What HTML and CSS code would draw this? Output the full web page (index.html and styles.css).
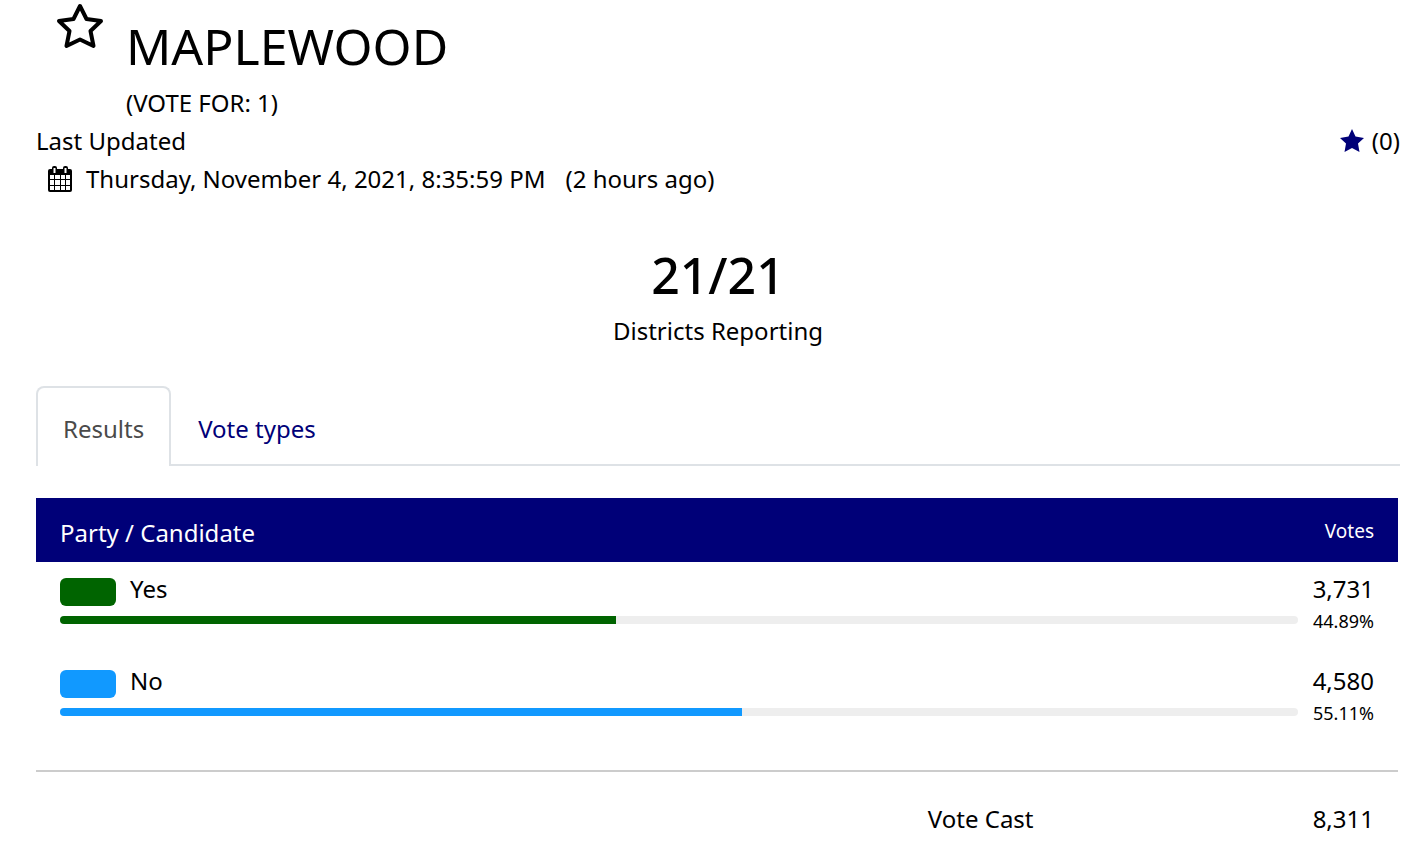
FILE: index.html
```html
<!DOCTYPE html>
<html lang="en">
<head>
    <meta charset="UTF-8">
    <meta name="viewport" content="width=device-width, initial-scale=1">
    <title>Maplewood - Election Results</title>
    <link rel="stylesheet" href="styles.css">
</head>
<body>

<main class="contest">
    <header class="contest-header">
        <button type="button" class="favorite" aria-label="Add to favorites">
            <svg class="favorite-icon" viewBox="0 0 48 52" aria-hidden="true">
                <path d="M24 6 L30.500 19 L45 21 L34.500 31 L37.500 46 L24 39.500 L10.500 46 L13.500 31 L3 21 L17.500 19 Z"/>
            </svg>
        </button>
        <div>
            <h1 class="contest-title">MAPLEWOOD</h1>
            <div>(VOTE FOR: 1)</div>
        </div>
    </header>

    <div class="updated">
        <div>
            <div>Last Updated</div>
            <div class="updated-time">
                <svg class="calendar-icon" viewBox="0 0 24 26" aria-hidden="true">
                    <path d="M2 3 H22 Q24 3 24 5 V24 Q24 26 22 26 H2 Q0 26 0 24 V5 Q0 3 2 3 Z"/>
                    <path class="calendar-cell" d="M2 9h4v4H2z M7 9h5v4H7z M13 9h4v4h-4z M18 9h4v4h-4z M2 14h4v5H2z M7 14h5v5H7z M13 14h4v5h-4z M18 14h4v5h-4z M2 20h4v4H2z M7 20h5v4H7z M13 20h4v4h-4z M18 20h4v4h-4z"/>
                    <rect x="4" y="0" width="5" height="8" rx="2"/>
                    <rect x="15" y="0" width="5" height="8" rx="2"/>
                    <path class="calendar-cell" d="M5.500 2h2v5h-2z M16.500 2h2v5h-2z"/>
                </svg>
                <span>Thursday, November 4, 2021, 8:35:59 PM</span>
                <span class="updated-ago">(2 hours ago)</span>
            </div>
        </div>
        <div class="favorite-count">
            <svg class="star-icon" viewBox="0 0 24 24" aria-hidden="true">
                <path d="M12 0 L15.500 7.500 L24 9 L18 14.500 L19.500 23 L12 19 L4.500 23 L6 14.500 L0 9 L8.500 7.500 Z"/>
            </svg>
            <span>(0)</span>
        </div>
    </div>

    <section class="reporting">
        <div class="reporting-count">21/21</div>
        <div>Districts Reporting</div>
    </section>

    <nav class="tabs">
        <a class="tab active" href="#results" aria-current="page">Results</a>
        <a class="tab" href="#vote-types">Vote types</a>
    </nav>

    <section class="results" id="results">
        <table class="results-table">
            <colgroup>
                <col class="col-party">
                <col>
                <col class="col-votes">
            </colgroup>
            <thead>
                <tr>
                    <th class="party-heading" colspan="2" scope="col">Party / Candidate</th>
                    <th class="votes-heading" scope="col">Votes</th>
                </tr>
            </thead>
            <tbody>
                <tr>
                    <td class="party" colspan="2">
                        <div class="party-name"><span class="swatch yes"></span>Yes</div>
                        <div class="bar"><div class="bar-fill yes" style="width: 44.89%"></div></div>
                    </td>
                    <td class="votes">
                        <div>3,731</div>
                        <div class="percent">44.89%</div>
                    </td>
                </tr>
                <tr>
                    <td class="party" colspan="2">
                        <div class="party-name"><span class="swatch no"></span>No</div>
                        <div class="bar"><div class="bar-fill no" style="width: 55.11%"></div></div>
                    </td>
                    <td class="votes">
                        <div>4,580</div>
                        <div class="percent">55.11%</div>
                    </td>
                </tr>
            </tbody>
        </table>
        <table class="results-table totals">
            <colgroup>
                <col class="col-party">
                <col>
            </colgroup>
            <tr>
                <th class="total-label" scope="row">Vote Cast</th>
                <td class="total-votes">8,311</td>
            </tr>
        </table>
    </section>
</main>

</body>
</html>
```

FILE: styles.css
```css
* {
    box-sizing: border-box;
}
body {
    margin: 0;
    background-color: #fff;
    color: #000;
    font-family: "Noto Sans", "Open Sans", sans-serif;
    font-size: 24px;
    line-height: 38px;
}
.contest {
    padding: 0 22px 0 36px;
}
.contest-header {
    display: flex;
    align-items: flex-start;
    gap: 22px;
    padding-left: 20px;
}
.favorite {
    padding: 0;
    border: none;
    background: none;
    cursor: pointer;
}
.favorite-icon {
    display: block;
    width: 48px;
    height: 52px;
    fill: none;
    stroke: #000;
    stroke-width: 4;
    stroke-linejoin: round;
}
.contest-title {
    margin: 8px 0 0;
    font-size: 50px;
    font-weight: 400;
    line-height: 76px;
}
.updated {
    display: flex;
    justify-content: space-between;
    align-items: flex-start;
}
.updated-time {
    display: flex;
    align-items: center;
    padding-left: 12px;
}
.calendar-icon {
    width: 24px;
    height: 26px;
    margin-right: 14px;
}
.calendar-cell {
    fill: #fff;
}
.updated-ago {
    margin-left: 20px;
}
.favorite-count {
    display: flex;
    align-items: center;
    gap: 8px;
}
.star-icon {
    width: 24px;
    height: 24px;
    fill: #000078;
}
.reporting {
    padding: 40px 0 36px;
    text-align: center;
}
.reporting-count {
    font-size: 50px;
    font-weight: 500;
    line-height: 74px;
}
.tabs {
    display: flex;
    border-bottom: 2px solid #dee2e6;
}
.tab {
    margin-bottom: -2px;
    padding: 22px 25px 18px;
    border: 2px solid transparent;
    border-bottom: none;
    border-radius: 8px 8px 0 0;
    color: #000078;
    text-decoration: none;
}
.tab.active {
    border-color: #dee2e6;
    background-color: #fff;
    color: #4a4a4a;
}
.results {
    padding: 32px 2px 0 0;
}
.results-table {
    width: 100%;
    table-layout: fixed;
    border-collapse: collapse;
}
.results-table th {
    font-weight: 400;
}
.results-table td {
    padding: 0;
    vertical-align: top;
}
.col-party {
    width: 75%;
}
.col-votes {
    width: 100px;
}
.results-table thead {
    background-color: #000078;
    color: #fff;
}
.results-table .party-heading {
    height: 64px;
    padding: 6px 24px 0;
    text-align: left;
}
.results-table .votes-heading {
    padding: 2px 24px 0 0;
    font-size: 19px;
    text-align: right;
}
.results-table .party {
    height: 92px;
    padding: 8px 0 0 24px;
}
.party-name {
    display: flex;
    align-items: center;
    gap: 14px;
}
.swatch {
    width: 56px;
    height: 28px;
    margin-top: 6px;
    border-radius: 6px;
}
.bar {
    height: 8px;
    margin-top: 8px;
    border-radius: 4px;
    background-color: #eee;
    overflow: hidden;
}
.bar-fill {
    height: 100%;
}
.yes {
    background-color: #006400;
}
.no {
    background-color: #1199ff;
}
.results-table .votes {
    padding: 8px 24px 0 0;
    text-align: right;
}
.percent {
    font-size: 18px;
    line-height: 26px;
}
.totals {
    margin-top: 24px;
    border-top: 2px solid #ccc;
}
.results-table .total-label,
.results-table .total-votes {
    padding: 28px 24px 0 0;
    text-align: right;
}
```
